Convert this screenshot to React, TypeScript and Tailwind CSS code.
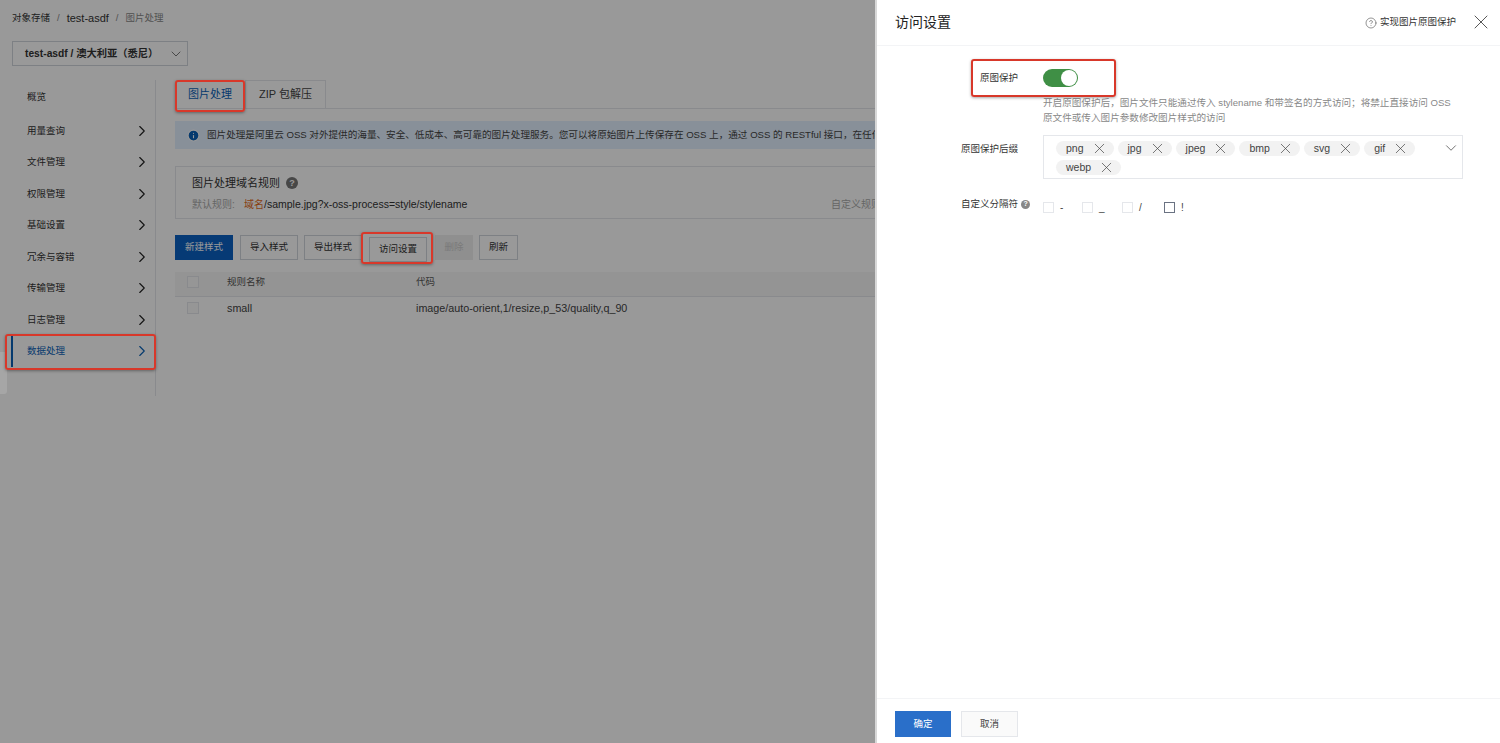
import { ChevronDown, ChevronRight, X, Info, CircleHelp } from 'lucide-react'

const menu = ['用量查询', '文件管理', '权限管理', '基础设置', '冗余与容错', '传输管理', '日志管理']
const suffixes = ['png', 'jpg', 'jpeg', 'bmp', 'svg', 'gif', 'webp']
const separators = [
  { char: '-', cls: 'w-[39px]', box: 'border-gray-200' },
  { char: '_', cls: 'w-[40px]', box: 'border-gray-200' },
  { char: '/', cls: 'w-[42px]', box: 'border-gray-200' },
  { char: '!', cls: 'w-[30px]', box: 'border-gray-500' },
]

function RedBox({ className }: { className: string }) {
  return (
    <div
      className={`absolute z-20 rounded-[3px] border-2 border-[#d8382a] shadow-[0_1px_3px_rgba(0,0,0,0.35)] pointer-events-none ${className}`}
    />
  )
}

function Sidebar() {
  return (
    <div className="w-[156px] h-[316px] shrink-0 border-r border-gray-200 relative">
      <div className="h-[34px] mb-[1px] flex items-center pl-[27px] text-[9.5px] text-[#333]">概览</div>
      {menu.map((item) => (
        <div key={item} className="h-[31.5px] flex items-center justify-between pl-[27px] pr-[4px] text-[9.5px] text-[#333]">
          {item}
          <ChevronRight size={18} strokeWidth={1.5} className="text-[#222]" />
        </div>
      ))}
      <div className="h-[31.5px] ml-[11px] border-l-2 border-[#0a62b8] flex items-center justify-between pl-[14px] pr-[4px] text-[9.5px] text-[#0a62b8]">
        数据处理
        <ChevronRight size={18} strokeWidth={1.5} />
      </div>
      <RedBox className="left-[5px] top-[254px] w-[151px] h-[36px]" />
    </div>
  )
}

function ToolButton({ label, cls }: { label: string; cls: string }) {
  return (
    <button className={`h-[25px] border border-gray-300 text-[9.5px] text-[#333] ${cls}`}>{label}</button>
  )
}

function Main() {
  return (
    <div className="ml-[19px] w-[720px] shrink-0">
      {/* Tabs */}
      <div className="relative flex h-[29px] border-b border-gray-200 text-[11px]">
        <div className="w-[70px] flex items-center justify-center text-[#0a62b8]">图片处理</div>
        <div className="w-[81px] flex items-center justify-center border border-b-0 border-gray-200 text-[#444]">
          ZIP 包解压
        </div>
        <RedBox className="left-0 top-0 w-[70px] h-[32px]" />
      </div>

      {/* Info bar */}
      <div className="mt-[12px] h-[28px] bg-[#e3f0ff] flex items-center pl-[12px] gap-[7px] whitespace-nowrap text-[9.6px] text-[#444] overflow-hidden">
        <Info size={13} fill="#0a62b8" stroke="#fff" className="shrink-0" />
        图片处理是阿里云 OSS 对外提供的海量、安全、低成本、高可靠的图片处理服务。您可以将原始图片上传保存在 OSS 上，通过 OSS 的 RESTful 接口，在任何
      </div>

      {/* Domain rule card */}
      <div className="mt-[17px] h-[53px] border border-gray-200 pl-[16px] pt-[8px] relative">
        <div className="flex items-center gap-[6px] text-[11px] text-[#333]">
          图片处理域名规则
          <span className="w-[12px] h-[12px] rounded-full bg-[#777] text-white text-[9px] font-bold flex items-center justify-center">?</span>
        </div>
        <div className="mt-[5px] flex items-center text-[10px]">
          <span className="w-[52px] text-[#aaa]">默认规则:</span>
          <span className="text-[#e26a1b]">域名</span>
          <span className="text-[10.5px] text-[#333]">/sample.jpg?x-oss-process=style/stylename</span>
          <span className="ml-auto mr-[13px] text-[#aaa]">自定义规则</span>
        </div>
      </div>

      {/* Toolbar */}
      <div className="mt-[16px] flex">
        <button className="h-[25px] w-[58px] bg-[#0a62c4] text-white text-[9.5px]">新建样式</button>
        <ToolButton label="导入样式" cls="w-[58px] ml-[7px]" />
        <ToolButton label="导出样式" cls="w-[58px] ml-[6px]" />
        <div className="relative ml-[7px]">
          <ToolButton label="访问设置" cls="w-[58px]" />
          <RedBox className="left-[-8px] top-[-3px] w-[72px] h-[32px]" />
        </div>
        <button className="h-[25px] w-[38px] ml-[8px] bg-[#eeeeee] text-[9.5px] text-[#ccc]">删除</button>
        <ToolButton label="刷新" cls="w-[39px] ml-[6px]" />
      </div>

      {/* Table */}
      <div className="mt-[10px] h-[25px] pb-[3px] bg-[#f7f7f7] border-b border-gray-200 flex items-center text-[9.5px] text-[#555]">
        <span className="ml-[12px] w-[12px] h-[12px] border border-gray-200 bg-[#fbfbfb]" />
        <span className="ml-[28px] w-[189px]">规则名称</span>
        <span>代码</span>
      </div>
      <div className="h-[26px] pb-[3px] flex items-center text-[10.75px] text-[#444]">
        <span className="ml-[12px] w-[12px] h-[12px] border border-gray-200 bg-[#fbfbfb]" />
        <span className="ml-[28px] w-[189px]">small</span>
        <span>image/auto-orient,1/resize,p_53/quality,q_90</span>
      </div>
    </div>
  )
}

function Drawer() {
  return (
    <div className="absolute z-30 right-0 top-0 bottom-0 w-[625px] bg-white border-l-2 border-[#d8d8d8] flex flex-col">
      <div className="h-[46px] shrink-0 border-b border-gray-100 flex items-center pl-[18px] pr-[7px]">
        <span className="text-[14px] text-[#222]">访问设置</span>
        <CircleHelp size={12} strokeWidth={1.25} className="ml-auto text-[#555]" />
        <span className="ml-[3px] text-[9.5px] text-[#333]">实现图片原图保护</span>
        <X size={24} strokeWidth={0.9} className="ml-[13px] mb-[2px] text-[#444]" />
      </div>

      <div className="flex-1 pl-[84px]">
        {/* 原图保护 */}
        <div className="relative mt-[23px] flex">
          <span className="w-[82px] pl-[19px] text-[9.5px] text-[#333] leading-[18px] whitespace-nowrap">原图保护</span>
          <div className="w-[35px] h-[18px] rounded-full bg-[#3f8f45] relative">
            <div className="absolute right-[1px] top-[1px] w-[16px] h-[16px] rounded-full bg-white" />
          </div>
          <RedBox className="left-[10px] top-[-10px] w-[145px] h-[38px]" />
        </div>
        <div className="mt-[8px] ml-[82px] w-[420px] whitespace-nowrap text-[9.6px] leading-[15px] text-[#888]">
          开启原图保护后，图片文件只能通过传入 stylename 和带签名的方式访问；将禁止直接访问 OSS
          <br />
          原文件或传入图片参数修改图片样式的访问
        </div>

        {/* 原图保护后缀 */}
        <div className="mt-[10px] flex">
          <span className="w-[82px] text-[9.5px] text-[#333] leading-[28px]">原图保护后缀</span>
          <div className="w-[420px] h-[44px] border border-gray-200 relative pl-[12px] pt-[5px] pr-[30px] flex flex-wrap content-start gap-x-[4px] gap-y-[4px]">
            {suffixes.map((s) => (
              <span key={s} className="h-[15px] pl-[10px] pr-[9px] rounded-full bg-[#f2f2f2] flex items-center gap-[10px] text-[10.5px] text-[#444]">
                {s}
                <X size={17} strokeWidth={1} className="-mx-[3px] -my-[2px] text-[#444]" />
              </span>
            ))}
            <ChevronDown size={18} strokeWidth={1} className="absolute right-[2px] top-[3px] text-[#444]" />
          </div>
        </div>

        {/* 自定义分隔符 */}
        <div className="mt-[18px] flex items-center">
          <span className="w-[82px] mb-[6px] flex items-center gap-[3px] text-[9.5px] text-[#333] whitespace-nowrap">
            自定义分隔符
            <span className="w-[9px] h-[9px] rounded-full bg-[#888] text-white text-[7px] font-bold flex items-center justify-center">?</span>
          </span>
          {separators.map((s) => (
            <span key={s.char} className={`${s.cls} flex items-center gap-[6px] text-[10px] text-[#444]`}>
              <span className={`w-[11px] h-[11px] border ${s.box}`} />
              {s.char}
            </span>
          ))}
        </div>
      </div>

      <div className="h-[45px] shrink-0 border-t border-gray-100 flex items-center pl-[18px] pt-[6px] gap-[10px]">
        <button className="w-[56px] h-[26px] bg-[#2a6fc9] text-white text-[9.5px]">确定</button>
        <button className="w-[57px] h-[26px] border border-gray-200 bg-[#fafafa] text-[9.5px] text-[#444]">取消</button>
      </div>
    </div>
  )
}

export default function App() {
  return (
    <div className="relative w-[1500px] h-[743px] overflow-hidden bg-white font-['Liberation_Sans','Noto_Sans_CJK_SC',sans-serif]">
      {/* Page below the mask */}
      <div className="pl-[12px] pt-[6px] h-[30px] flex items-center text-[9.5px] text-[#333]">
        <span>对象存储</span>
        <span className="mx-[7px] text-[#888]">/</span>
        <span className="text-[11px]">test-asdf</span>
        <span className="mx-[7px] text-[#888]">/</span>
        <span className="text-[#888]">图片处理</span>
      </div>
      <div className="ml-[12px] mt-[11px] w-[176px] h-[25px] border border-gray-300 flex items-center pl-[12px] pr-[3px] text-[10.25px] font-bold text-[#333]">
        test-asdf / 澳大利亚（悉尼）
        <ChevronDown size={16} strokeWidth={1} className="ml-auto text-[#333]" />
      </div>
      <div className="mt-[14px] flex">
        <Sidebar />
        <Main />
      </div>

      {/* Mask */}
      <div className="absolute inset-0 z-10 bg-black/40" />

      {/* Collapse handle on the page edge, paler than the mask */}
      <div className="absolute z-[11] left-0 top-[352px] w-[7px] h-[42px] rounded-br-[3px] bg-[#a6a6a6]" />
      <Drawer />
    </div>
  )
}
